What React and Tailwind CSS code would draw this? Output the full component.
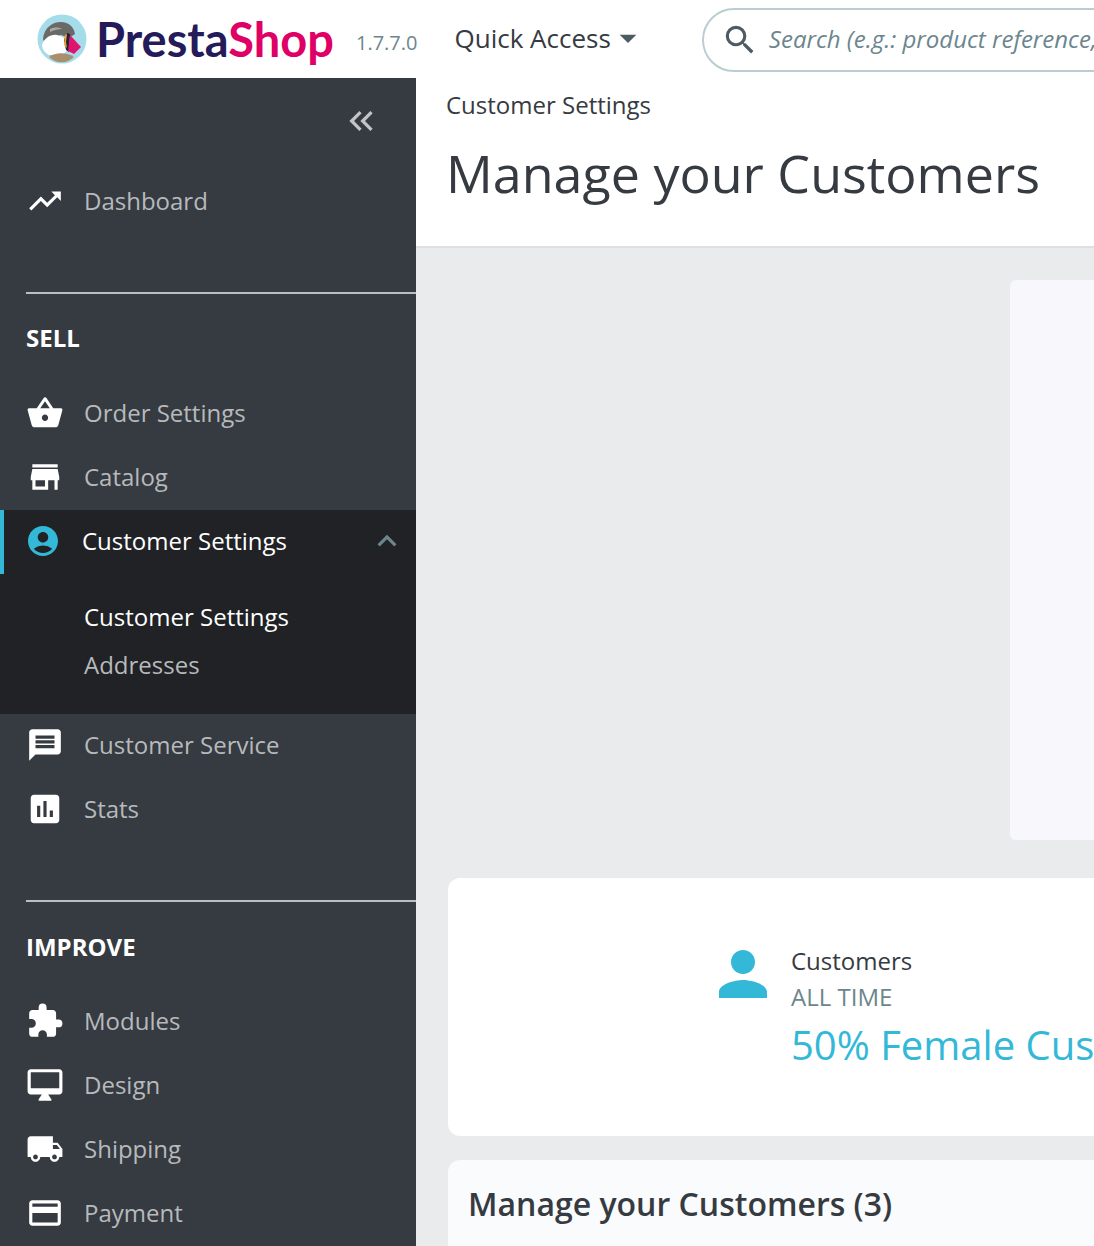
import React from 'react';
import {
  MdTrendingUp, MdShoppingBasket, MdStore, MdAccountCircle, MdExpandLess, MdMessage,
  MdAssessment, MdExtension, MdOutlineDesktopMac, MdLocalShipping, MdCreditCard, MdSearch,
  MdPerson, MdArrowDropDown, MdKeyboardDoubleArrowLeft,
} from 'react-icons/md';

function Logo() {
  return (
    <svg width="50" height="50" viewBox="0 0 50 50" className="shrink-0">
      <circle cx="25" cy="25" r="24.5" fill="#a5dcea" />
      <path d="M6 25C7 14 15 8 24 8c8 0 13 5 14 12l-6 4-8-3-9 3-7 6z" fill="#6b6966" />
      <path d="M5 31c2-7 9-11 15-10 5 1 8 3 9 7l1 9-5 4H12c-4-2-7-6-7-10z" fill="#fff" />
      <path d="M13 15c4-2 9-2 12 0-4 0-8 1-12 3z" fill="#a9a9a7" />
      <path d="M30 19l3 1-1 18-3-2-2-10z" fill="#22203a" />
      <path d="M28 21l2-1-1 8 1 6-3-3z" fill="#f0a42a" />
      <path d="M33 21l11 12-7 7-6-3z" fill="#e0136f" />
      <path d="M12 43c6-5 18-5 25 0-7 7-18 7-25 0z" fill="#a8906f" />
    </svg>
  );
}

function NavItem({ icon: Icon, label, size = 38 }) {
  return (
    <div className="flex h-16 items-center pl-[26px] text-[24px] text-[#b7babc]">
      <span className="flex w-[38px] justify-center text-white">
        <Icon size={size} />
      </span>
      <span className="ml-5">{label}</span>
    </div>
  );
}

function Section({ label }) {
  return <div className="pl-[26px] text-[24px] leading-8 font-bold text-white">{label}</div>;
}

function Sidebar() {
  return (
    <aside className="w-[416px] shrink-0 bg-[#363a41]">
      <div className="flex justify-end pt-[23px] pr-[35px] text-[#c3c6c8]">
        <MdKeyboardDoubleArrowLeft size={40} />
      </div>
      <div className="mt-[28px]">
        <NavItem icon={MdTrendingUp} label="Dashboard" />
      </div>
      <div className="mt-[59px] ml-[26px] h-0.5 bg-[#bebebe]" />
      <div className="mt-[28px]">
        <Section label="SELL" />
      </div>
      <div className="mt-[27px]">
        <NavItem icon={MdShoppingBasket} label="Order Settings" size={42} />
        <NavItem icon={MdStore} label="Catalog" />
      </div>
      <div className="mt-px bg-[#202226] pb-[25px]">
        <div className="flex h-16 items-center border-l-4 border-[#34b8d8] pb-[2px] pl-[21px] text-[24px] text-white">
          <span className="flex w-[36px] justify-center text-[#34b8d8]">
            <MdAccountCircle size={38} />
          </span>
          <span className="ml-[21px]">Customer Settings</span>
          <MdExpandLess size={38} className="mr-[10px] ml-auto text-[#6c868e]" />
        </div>
        <div className="mt-[19px] pl-[84px] text-[24px] leading-[48px]">
          <div className="text-white">Customer Settings</div>
          <div className="text-[#b7babc]">Addresses</div>
        </div>
      </div>
      <div className="-mt-px">
        <NavItem icon={MdMessage} label="Customer Service" />
        <NavItem icon={MdAssessment} label="Stats" />
      </div>
      <div className="mt-[59px] ml-[26px] h-0.5 bg-[#bebebe]" />
      <div className="mt-[29px]">
        <Section label="IMPROVE" />
      </div>
      <div className="mt-[26px]">
        <NavItem icon={MdExtension} label="Modules" size={40} />
        <NavItem icon={MdOutlineDesktopMac} label="Design" size={42} />
        <NavItem icon={MdLocalShipping} label="Shipping" size={40} />
        <NavItem icon={MdCreditCard} label="Payment" size={38} />
      </div>
    </aside>
  );
}

function Header() {
  return (
    <header className="flex h-[78px] shrink-0 items-center overflow-hidden bg-white">
      <div className="ml-[37px]">
        <Logo />
      </div>
      <div className="ml-[9px] font-['Lato',sans-serif] text-[47px] leading-none font-bold whitespace-nowrap">
        <span className="text-[#251b5b]">Presta</span>
        <span className="text-[#df0067]">Shop</span>
      </div>
      <span className="mt-2 ml-[22px] text-[20px] whitespace-nowrap text-[#6c868e]">1.7.7.0</span>
      <div className="mt-[-2px] ml-[37px] flex shrink-0 items-center text-[26px] whitespace-nowrap text-[#363a41]">
        Quick Access
        <MdArrowDropDown size={40} className="ml-[-3px] shrink-0 text-[#4d5b62]" />
      </div>
      <div className="mt-[2px] ml-[54px] flex h-[64px] w-[500px] shrink-0 items-center overflow-hidden rounded-l-[32px] border-2 border-[#bbcdd2] pl-[17px]">
        <MdSearch size={38} className="shrink-0 text-[#4d5b62]" />
        <span className="mb-[2px] ml-[10px] text-[24px] whitespace-nowrap text-[#6c868e] italic">
          Search (e.g.: product reference, customer name...)
        </span>
      </div>
    </header>
  );
}

function Main() {
  return (
    <main className="min-w-0 flex-1 overflow-hidden bg-[#eaebec]">
      <div className="h-[170px] border-b-2 border-[#dfdfdf] bg-white pl-[30px]">
        <div className="pt-[11px] text-[24px] leading-8 whitespace-nowrap text-[#363a41]">Customer Settings</div>
        <h1 className="mt-[20px] text-[52px] leading-[64px] whitespace-nowrap text-[#363a41]">Manage your Customers</h1>
      </div>
      <div className="pl-[32px]">
        <div className="mt-[32px] ml-[562px] h-[560px] rounded-l-md bg-[#f8f8fc]" />
        <div className="mt-[38px] flex h-[258px] overflow-hidden rounded-l-xl bg-white pt-[65px] pl-[259px]">
          <MdPerson size={72} className="mt-[-5px] shrink-0 text-[#34b8d8]" />
          <div className="ml-[12px] whitespace-nowrap">
            <div className="text-[24px] leading-9 text-[#363a41]">Customers</div>
            <div className="text-[24px] leading-9 text-[#6c868e]">ALL TIME</div>
            <div className="text-[40px] leading-[60px] text-[#34b8d8]">50% Female Customers</div>
          </div>
        </div>
        <div className="mt-6 h-[100px] rounded-tl-xl bg-[#fafbfc] pt-[23px] pl-[20px]">
          <h2 className="text-[32px] leading-[42px] font-semibold whitespace-nowrap text-[#363a41]">Manage your Customers (3)</h2>
        </div>
      </div>
    </main>
  );
}

export default function App() {
  return (
    <div className="flex h-[1246px] w-[1094px] flex-col overflow-hidden bg-white font-['Open_Sans',sans-serif]">
      <Header />
      <div className="flex min-h-0 flex-1">
        <Sidebar />
        <Main />
      </div>
    </div>
  );
}
